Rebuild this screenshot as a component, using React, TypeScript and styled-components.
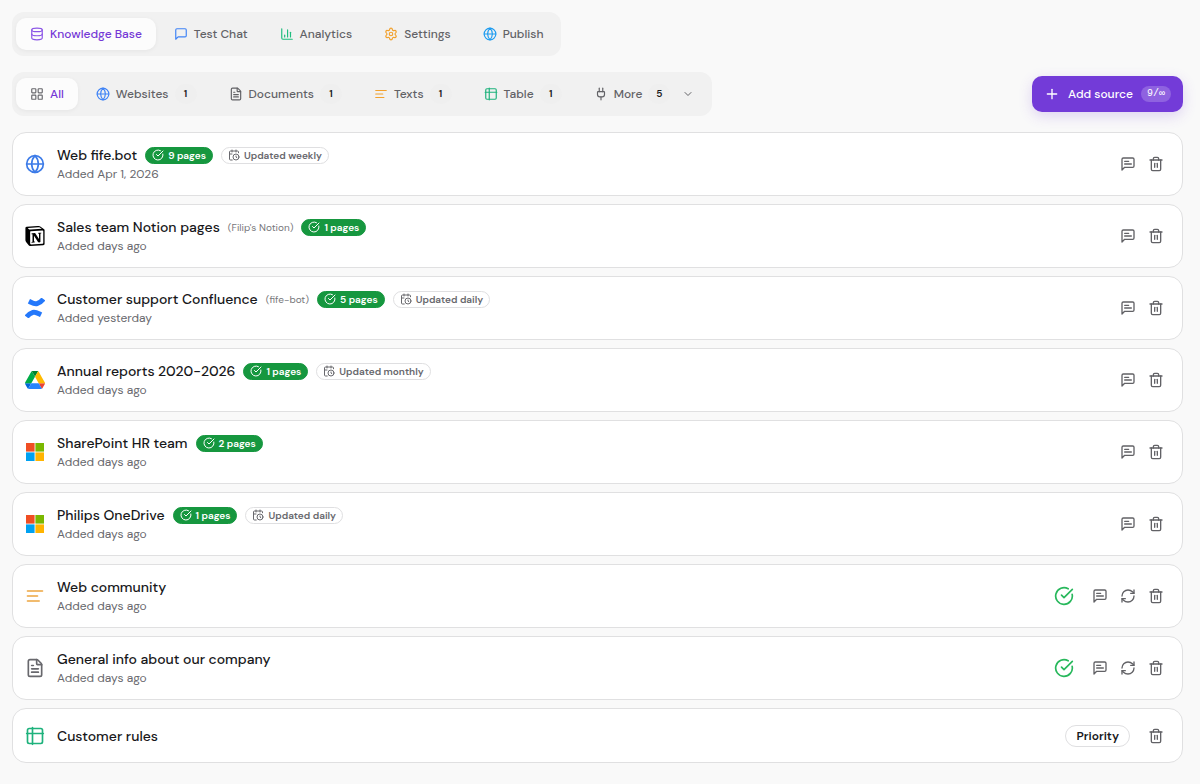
import React from "react";
import styled, { createGlobalStyle, css } from "styled-components";
import {
  CalendarClock,
  ChartColumn,
  ChevronDown,
  CircleCheckBig,
  Database,
  FileText,
  Globe,
  LayoutGrid,
  Plug,
  Plus,
  RefreshCw,
  Settings,
  Trash2,
} from "lucide-react";

const GlobalStyle = createGlobalStyle`
  *, *::before, *::after { box-sizing: border-box; }
  body {
    margin: 0;
    background: #f9f9f9;
    color: #18181b;
    font-family: "DM Sans", Inter, "Liberation Sans", sans-serif;
    font-size: 14px;
  }
  button { font: inherit; color: inherit; border: 0; background: none; cursor: pointer; }
  h2, p, ul { margin: 0; padding: 0; }
  svg { display: block; flex: none; }
`;

const Page = styled.main`
  display: flex;
  flex-direction: column;
  gap: 16px;
  padding: 12px 17px 20px 12px;
`;

const Toolbar = styled.div`
  display: flex;
  align-items: center;
  justify-content: space-between;
`;

const TabBar = styled.nav`
  display: flex;
  align-self: flex-start;
  gap: 4px;
  padding: 6px 4px;
  border-radius: 12px;
  background: #f1f1f1;
`;

const Tab = styled.button<{ $active?: boolean }>`
  display: flex;
  align-items: center;
  gap: 6px;
  height: 32px;
  padding: 0 14px;
  border-radius: 10px;
  color: #626266;
  font-size: 12px;
  font-weight: 500;
  line-height: 20px;
  white-space: nowrap;
  ${(p) =>
    p.$active &&
    css`
      background: #fcfcfc;
      color: #7538d6;
      box-shadow: 0 1px 4px rgba(0, 0, 0, 0.05);
    `}
`;

const Count = styled.span`
  display: grid;
  place-items: center;
  width: 22px;
  height: 20px;
  border-radius: 10px;
  background: #efefef;
  color: #18181b;
  font-size: 10px;
  font-weight: 600;
`;

const MenuArrow = styled(ChevronDown)`
  margin-left: 6px;
`;

const AddButton = styled.button`
  display: flex;
  align-items: center;
  gap: 8px;
  height: 36px;
  padding: 0 12px;
  border-radius: 10px;
  background: #733bd8;
  color: #ffffff;
  font-size: 12px;
  font-weight: 500;
  box-shadow: 0 4px 14px rgba(115, 59, 216, 0.2);
`;

const Quota = styled.span`
  padding: 0 6px;
  border-radius: 8px;
  background: #8f62e0;
  font-family: "Liberation Mono", monospace;
  font-size: 10px;
  line-height: 16px;
`;

const SourceList = styled.ul`
  display: flex;
  flex-direction: column;
  gap: 8px;
  list-style: none;
`;

const SourceRow = styled.li`
  display: flex;
  align-items: center;
  gap: 12px;
  min-height: 55px;
  padding: 12px;
  border: 1px solid #e0e0e1;
  border-radius: 14px;
  background: #ffffff;
`;

const SourceBody = styled.div`
  flex: 1;
  min-width: 0;
`;

const TitleLine = styled.div`
  display: flex;
  align-items: center;
  gap: 8px;
`;

const Title = styled.h2`
  font-size: 14px;
  font-weight: 500;
  line-height: 20px;
`;

const Origin = styled.span`
  color: #77777b;
  font-size: 10px;
`;

const Added = styled.p`
  color: #68686d;
  font-size: 12px;
  line-height: 18px;
`;

const Chip = styled.span<{ $solid?: boolean }>`
  display: flex;
  align-items: center;
  gap: 4px;
  height: 17px;
  padding: 0 6px;
  border: 1px solid ${(p) => (p.$solid ? "#16973f" : "#dfdfe1")};
  border-radius: 9px;
  background: ${(p) => (p.$solid ? "#16973f" : "#ffffff")};
  color: ${(p) => (p.$solid ? "#ffffff" : "#68686d")};
  font-size: 10px;
  font-weight: 600;
  white-space: nowrap;
`;

const Priority = styled.span`
  padding: 0 10px;
  border: 1px solid #dfdfe1;
  border-radius: 11px;
  font-size: 12px;
  font-weight: 600;
  line-height: 20px;
`;

const Actions = styled.div`
  display: flex;
`;

const IconButton = styled.button`
  display: grid;
  place-items: center;
  width: 28px;
  height: 28px;
  padding: 0;
  color: #626266;
`;

type GlyphProps = { size?: number; color?: string };

const Stroke = ({ size = 16, color = "currentColor", children }: GlyphProps & { children: React.ReactNode }) => (
  <svg
    width={size}
    height={size}
    viewBox="0 0 24 24"
    fill="none"
    stroke={color}
    strokeWidth={2}
    strokeLinecap="round"
    strokeLinejoin="round"
    aria-hidden
  >
    {children}
  </svg>
);

const bubble = "M21 15a2 2 0 0 1-2 2H7l-4 4V5a2 2 0 0 1 2-2h14a2 2 0 0 1 2 2z";

const Message = (p: GlyphProps) => (
  <Stroke {...p}>
    <path d={bubble} />
  </Stroke>
);
const MessageText = (p: GlyphProps) => (
  <Stroke {...p}>
    <path d={bubble} />
    <path d="M13 8H7M17 12H7" />
  </Stroke>
);
const Lines = (p: GlyphProps) => (
  <Stroke {...p}>
    <path d="M3 6h18M3 12h12M3 18h14" />
  </Stroke>
);
const Grid = (p: GlyphProps) => (
  <Stroke {...p}>
    <rect x="3" y="3" width="18" height="18" rx="2" />
    <path d="M2 9h20M9 2v20" />
  </Stroke>
);

const NotionLogo = () => (
  <svg width="20" height="20" viewBox="0 0 24 24" aria-hidden>
    <path
      fill="#000"
      d="M1.900 1 15.200 0c1.700-.1 2.100 0 3.100.7l4.200 3c.7.500 1 .7 1 1.200v16.400c0 1-.4 1.600-1.700 1.700L6.400 24c-1 0-1.500-.1-2-.8l-3.100-4C.8 18.400.5 17.900.5 17.200V2.700C.5 1.800.9 1.100 1.900 1z"
    />
    <path fill="#fff" d="M3.800 2.300 16 1.400c.9-.1 1.300 0 1.900.4l1.900 1.300c.2.2.2.3 0 .3L6.900 4.200c-1.200.1-1.500.1-2.200-.4l-1.200-1c-.2-.2-.1-.4.3-.5z" />
    <path fill="#fff" d="M6.800 6.300 21 5.500c.6 0 .9.300.9.900v13.700c0 .7-.2 1.100-.9 1.200l-13.700.8c-.8 0-1.100-.3-1.100-1V7.200c0-.6.100-.9.600-.9z" />
    <path
      fill="#000"
      d="M7.800 9.800c-.1-.4.1-1 .8-1.100l3.500-.2 4.700 7.200V9.300l-1.200-.2c-.1-.5.3-.8.800-.9l3.200-.2c.1.400 0 .8-.4.9l-.7.200v10.200c-1.300.7-2.300.8-3.100-.4L10.800 11.700v7l1.400.3s0 .8-1.200.8l-3.200.2c-.1-.2 0-.7.300-.8l.9-.2V9.900z"
    />
  </svg>
);

const ConfluenceLogo = () => (
  <svg width="20" height="20" viewBox="0 0 20 20" fill="none" stroke="#2478fb" strokeWidth="5" aria-hidden>
    <path d="M3.900 3.200C7 4.700 9.500 6.400 12 5.600c3-.9 4.700-2.200 6.400-4.600" />
    <path d="M16.100 16.800c-3.100-1.500-5.600-3.200-8.100-2.400-3 .9-4.700 2.200-6.400 4.600" />
  </svg>
);

const DriveLogo = () => (
  <svg width="20" height="20" viewBox="0 -4.500 87.300 87" aria-hidden>
    <path fill="#0066da" d="m6.600 66.850 3.850 6.650c.8 1.400 1.950 2.500 3.300 3.300l13.750-23.800h-27.500c0 1.550.4 3.100 1.200 4.500z" />
    <path fill="#00ac47" d="m43.650 25-13.750-23.800c-1.350.8-2.500 1.900-3.300 3.300l-25.400 44a9.060 9.060 0 0 0 -1.200 4.500h27.500z" />
    <path fill="#ea4335" d="m73.550 76.800c1.350-.8 2.500-1.900 3.300-3.300l1.600-2.750 7.650-13.250c.8-1.400 1.200-2.950 1.200-4.500h-27.500l5.850 11.500z" />
    <path fill="#00832d" d="m43.650 25 13.750-23.800c-1.350-.8-2.900-1.200-4.500-1.200h-18.500c-1.600 0-3.150.45-4.500 1.200z" />
    <path fill="#2684fc" d="m59.800 53h-32.300l-13.750 23.800c1.350.8 2.900 1.200 4.500 1.200h50.800c1.600 0 3.150-.45 4.500-1.200z" />
    <path fill="#ffba00" d="m73.400 26.500-12.700-22c-.8-1.400-1.950-2.500-3.300-3.300l-13.750 23.800 16.150 28h27.450c0-1.550-.4-3.100-1.200-4.500z" />
  </svg>
);

const MicrosoftLogo = () => (
  <svg width="20" height="20" viewBox="0 0 20 20" aria-hidden>
    <path fill="#f04e23" d="M1 1h8.600v8.600H1z" />
    <path fill="#7ab800" d="M10.400 1H19v8.600h-8.600z" />
    <path fill="#00a1f1" d="M1 10.400h8.600V19H1z" />
    <path fill="#ffb400" d="M10.400 10.400H19V19h-8.600z" />
  </svg>
);

type Source = {
  name: string;
  icon: React.ReactNode;
  origin?: string;
  added?: string;
  pages?: number;
  schedule?: string;
  synced?: boolean;
  priority?: boolean;
};

const sources: Source[] = [
  { name: "Web fife.bot", icon: <Globe size={20} color="#3c7be8" />, added: "Apr 1, 2026", pages: 9, schedule: "weekly" },
  { name: "Sales team Notion pages", icon: <NotionLogo />, origin: "(Filip's Notion)", added: "days ago", pages: 1 },
  { name: "Customer support Confluence", icon: <ConfluenceLogo />, origin: "(fife-bot)", added: "yesterday", pages: 5, schedule: "daily" },
  { name: "Annual reports 2020-2026", icon: <DriveLogo />, added: "days ago", pages: 1, schedule: "monthly" },
  { name: "SharePoint HR team", icon: <MicrosoftLogo />, added: "days ago", pages: 2 },
  { name: "Philips OneDrive", icon: <MicrosoftLogo />, added: "days ago", pages: 1, schedule: "daily" },
  { name: "Web community", icon: <Lines size={20} color="#eda53f" />, added: "days ago", synced: true },
  { name: "General info about our company", icon: <FileText size={20} color="#68686d" />, added: "days ago", synced: true },
  { name: "Customer rules", icon: <Grid size={20} color="#1eb27c" />, priority: true },
];

const sections = [
  { label: "Knowledge Base", icon: <Database size={14} color="#8b55e6" /> },
  { label: "Test Chat", icon: <Message size={14} color="#3f83f6" /> },
  { label: "Analytics", icon: <ChartColumn size={14} color="#1fbd7e" /> },
  { label: "Settings", icon: <Settings size={14} color="#f2a12e" /> },
  { label: "Publish", icon: <Globe size={14} color="#1e9cf0" /> },
];

const filters = [
  { label: "All", icon: <LayoutGrid size={14} color="#68686d" /> },
  { label: "Websites", icon: <Globe size={14} color="#3f83f6" />, count: 1 },
  { label: "Documents", icon: <FileText size={14} />, count: 1 },
  { label: "Texts", icon: <Lines size={14} color="#f2a12e" />, count: 1 },
  { label: "Table", icon: <Grid size={14} color="#1eb27c" />, count: 1 },
  { label: "More", icon: <Plug size={14} />, count: 5, menu: true },
];

const Row = ({ source: s }: { source: Source }) => (
  <SourceRow>
    {s.icon}
    <SourceBody>
      <TitleLine>
        <Title>{s.name}</Title>
        {s.origin && <Origin>{s.origin}</Origin>}
        {s.pages && (
          <Chip $solid>
            <CircleCheckBig size={12} />
            {`${s.pages} pages`}
          </Chip>
        )}
        {s.schedule && (
          <Chip>
            <CalendarClock size={12} />
            {`Updated ${s.schedule}`}
          </Chip>
        )}
      </TitleLine>
      {s.added && <Added>{`Added ${s.added}`}</Added>}
    </SourceBody>
    {s.synced && <CircleCheckBig size={20} color="#28b85c" />}
    {s.priority && <Priority>Priority</Priority>}
    <Actions>
      {!s.priority && (
        <IconButton aria-label={`Instructions for ${s.name}`}>
          <MessageText />
        </IconButton>
      )}
      {s.synced && (
        <IconButton aria-label={`Refresh ${s.name}`}>
          <RefreshCw size={16} />
        </IconButton>
      )}
      <IconButton aria-label={`Delete ${s.name}`}>
        <Trash2 size={16} />
      </IconButton>
    </Actions>
  </SourceRow>
);

export default function App() {
  return (
    <>
      <GlobalStyle />
      <Page>
        <TabBar aria-label="Sections">
          {sections.map((t, i) => (
            <Tab key={t.label} $active={i === 0}>
              {t.icon}
              {t.label}
            </Tab>
          ))}
        </TabBar>
        <Toolbar>
          <TabBar aria-label="Source types">
            {filters.map((t, i) => (
              <Tab key={t.label} $active={i === 0}>
                {t.icon}
                {t.label}
                {t.count && <Count>{t.count}</Count>}
                {t.menu && <MenuArrow size={12} />}
              </Tab>
            ))}
          </TabBar>
          <AddButton>
            <Plus size={16} />
            Add source
            <Quota>9/∞</Quota>
          </AddButton>
        </Toolbar>
        <SourceList>
          {sources.map((s) => (
            <Row key={s.name} source={s} />
          ))}
        </SourceList>
      </Page>
    </>
  );
}
